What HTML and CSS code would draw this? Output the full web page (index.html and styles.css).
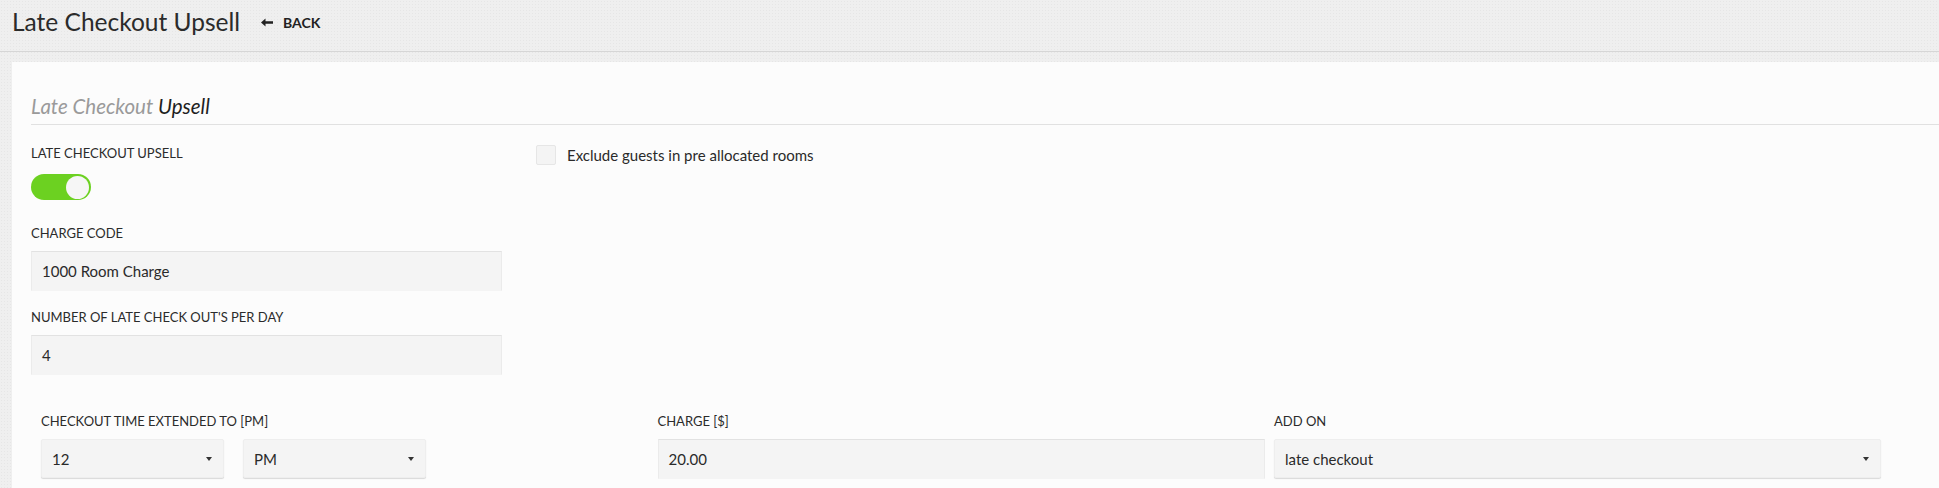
FILE: index.html
```html
<!DOCTYPE html>
<html lang="en">
<head>
<meta charset="utf-8">
<title>Late Checkout Upsell</title>
<link rel="stylesheet" href="styles.css">
</head>
<body>
<header class="page-header">
  <h1 class="page-title">Late Checkout Upsell</h1>
  <a class="back-link" href="#">
    <svg class="back-arrow" width="12" height="9" viewBox="0 0 12 9"><path d="M0 4.5 L4.5 0.5 L4.5 3.3 L12 3.3 L12 5.7 L4.5 5.7 L4.5 8.5 Z" fill="#222"/></svg>
    <span>BACK</span>
  </a>
</header>
<main class="card">
  <h2 class="section-title"><span class="muted">Late Checkout</span> Upsell</h2>
  <div class="top-row">
    <div class="left-col">
      <div class="field">
        <div class="field-label">LATE CHECKOUT UPSELL</div>
        <div class="toggle on"><span class="knob"></span></div>
      </div>
      <div class="field field-charge">
        <div class="field-label">CHARGE CODE</div>
        <div class="input">1000 Room Charge</div>
      </div>
      <div class="field field-number">
        <div class="field-label">NUMBER OF LATE CHECK OUT'S PER DAY</div>
        <div class="input">4</div>
      </div>
    </div>
    <div class="right-col">
      <label class="checkbox-row"><span class="checkbox"></span><span class="checkbox-text">Exclude guests in pre allocated rooms</span></label>
    </div>
  </div>
  <div class="bottom-row">
    <div class="field">
      <div class="field-label">CHECKOUT TIME EXTENDED TO [PM]</div>
      <div class="select-pair">
        <div class="select"><span>12</span><span class="caret"></span></div>
        <div class="select"><span>PM</span><span class="caret"></span></div>
      </div>
    </div>
    <div class="field">
      <div class="field-label">CHARGE [$]</div>
      <div class="input">20.00</div>
    </div>
    <div class="field">
      <div class="field-label">ADD ON</div>
      <div class="select"><span>late checkout</span><span class="caret"></span></div>
    </div>
  </div>
</main>
</body>
</html>
```
FILE: styles.css
```css
* { box-sizing: border-box; }
html, body { margin: 0; padding: 0; }
body {
  font-family: "Lato", "Open Sans", sans-serif;
  color: #2a2a2a;
  background-color: #efefef;
  background-image: radial-gradient(#e6e6e6 0.8px, transparent 1px);
  background-size: 3px 3px;
  height: 488px;
  overflow: hidden;
}
.page-header {
  height: 52px;
  display: flex;
  align-items: center;
  padding: 0 0 0 12px;
  border-bottom: 1px solid #d6d6d6;
}
.page-title {
  margin: 0;
  font-size: 24.5px;
  font-weight: 400;
  color: #2b2b2b;
  line-height: 30px;
  margin-top: -8px;
}
.back-link {
  display: flex;
  align-items: center;
  margin-left: 21px;
  margin-top: -6px;
  text-decoration: none;
  color: #222;
  font-size: 14px;
  font-weight: 700;
}
.back-arrow { margin-right: 10px; }
.card {
  margin: 10px 0 0 12px;
  background: #fcfcfc;
  padding: 32px 0 0 19px;
  height: 430px;
}
.section-title {
  margin: 0;
  font-size: 20.5px;
  font-style: italic;
  font-weight: 400;
  line-height: 24px;
  color: #1f1f1f;
  padding-bottom: 6px;
  border-bottom: 1px solid #e1e1e1;
}
.section-title .muted { color: #9a9a9a; }
.top-row {
  display: flex;
  padding-top: 20px;
}
.left-col { width: 471px; }
.right-col { margin-left: 34px; }
.field-label {
  font-size: 13px;
  line-height: 16px;
  color: #2b2b2b;
}
.toggle {
  margin-top: 13px;
  width: 60px;
  height: 26px;
  border-radius: 13px;
  background: #6cd121;
  display: flex;
  justify-content: flex-end;
  align-items: center;
  padding-right: 2px;
}
.knob {
  width: 23px;
  height: 23px;
  border-radius: 50%;
  background: #f6f6f6;
}
.field-charge { margin-top: 25px; }
.field-number { margin-top: 18px; }
.input, .select {
  margin-top: 10px;
  height: 40px;
  background: #f4f4f4;
  border: 1px solid #ebebeb;
  border-top-color: #e2e2e2;
  border-bottom-color: #f4f4f4;
  font-size: 15px;
  color: #2a2a2a;
  display: flex;
  align-items: center;
  padding-left: 10px;
}
.select {
  justify-content: space-between;
  padding-right: 11px;
  border: 1px solid #eeeeee;
  box-shadow: 0 1px 1px rgba(0, 0, 0, 0.14);
  border-radius: 2px;
  height: 39px;
}
.caret {
  width: 0;
  height: 0;
  border-left: 3.5px solid transparent;
  border-right: 3.5px solid transparent;
  border-top: 4px solid #333;
}
.checkbox-row {
  display: flex;
  align-items: center;
  font-size: 15px;
  color: #2a2a2a;
}
.checkbox {
  width: 20px;
  height: 20px;
  background: #f4f4f4;
  border: 1px solid #e6e6e6;
  border-radius: 2px;
}
.checkbox-text { margin-left: 11px; margin-top: -1px; }
.bottom-row {
  display: grid;
  grid-template-columns: 607px 607px 607px;
  column-gap: 9.5px;
  padding: 38px 0 0 10px;
}
.select-pair {
  display: flex;
  gap: 19px;
}
.select-pair .select { width: 183px; }
```
